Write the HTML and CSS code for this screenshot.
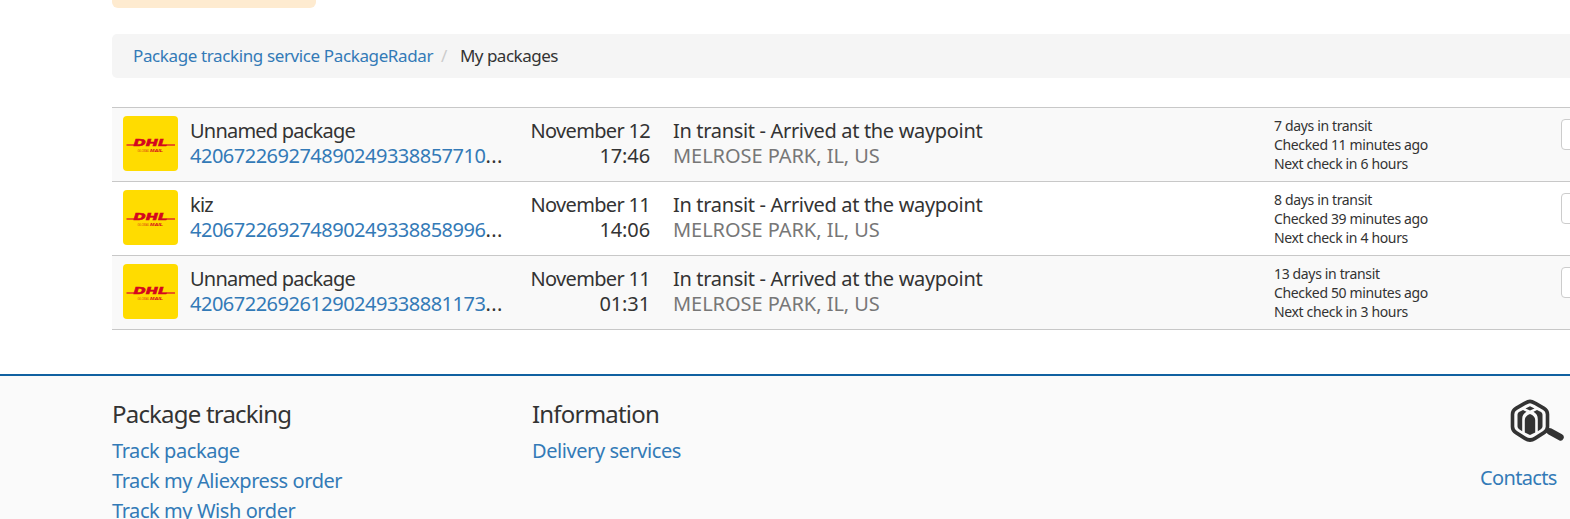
FILE: index.html
```html
<!DOCTYPE html>
<html lang="en">
<head>
  <meta charset="UTF-8">
  <meta name="viewport" content="width=device-width, initial-scale=1.0">
  <title>My packages</title>
  <link rel="stylesheet" href="styles.css">
</head>
<body>
  <svg width="0" height="0" class="sprite" aria-hidden="true">
    <symbol id="dhl" viewBox="0 0 55 55">
      <rect width="55" height="55" rx="4" fill="#ffdc00"/>
      <path d="M3.500 28h9l-.8 2H3.500zM43.500 28H52v2h-9.300z" fill="#ea5b1c"/>
      <text x="10.500" y="29.900" textLength="34" lengthAdjust="spacingAndGlyphs" class="dhl-name">DHL</text>
      <text x="14.500" y="36.200" textLength="12" lengthAdjust="spacingAndGlyphs" class="dhl-sub">GLOBAL</text>
      <text x="27" y="36.200" textLength="13" lengthAdjust="spacingAndGlyphs" class="dhl-sub dhl-mail">MAIL</text>
    </symbol>
  </svg>

  <div class="page">
    <div class="container">
      <div class="notice"></div>

      <ol class="breadcrumb">
        <li><a href="#">Package tracking service PackageRadar</a></li>
        <li class="active">My packages</li>
      </ol>

      <div class="packages">
        <div class="package">
          <svg class="logo"><use href="#dhl"/></svg>
          <div class="name">
            <div class="title">Unnamed package</div>
            <div class="number"><a href="#">420672269274890249338857710</a>...</div>
          </div>
          <div class="date">November 12 <div class="time">17:46</div></div>
          <div class="status">
            <div class="event">In transit - Arrived at the waypoint</div>
            <div class="place">MELROSE PARK, IL, US</div>
          </div>
          <div class="info">7 days in transit<br>Checked 11 minutes ago<br>Next check in 6 hours</div>
          <button class="btn"></button>
        </div>
        <div class="package">
          <svg class="logo"><use href="#dhl"/></svg>
          <div class="name">
            <div class="title">kiz</div>
            <div class="number"><a href="#">420672269274890249338858996</a>...</div>
          </div>
          <div class="date">November 11 <div class="time">14:06</div></div>
          <div class="status">
            <div class="event">In transit - Arrived at the waypoint</div>
            <div class="place">MELROSE PARK, IL, US</div>
          </div>
          <div class="info">8 days in transit<br>Checked 39 minutes ago<br>Next check in 4 hours</div>
          <button class="btn"></button>
        </div>
        <div class="package">
          <svg class="logo"><use href="#dhl"/></svg>
          <div class="name">
            <div class="title">Unnamed package</div>
            <div class="number"><a href="#">420672269261290249338881173</a>...</div>
          </div>
          <div class="date">November 11 <div class="time">01:31</div></div>
          <div class="status">
            <div class="event">In transit - Arrived at the waypoint</div>
            <div class="place">MELROSE PARK, IL, US</div>
          </div>
          <div class="info">13 days in transit<br>Checked 50 minutes ago<br>Next check in 3 hours</div>
          <button class="btn"></button>
        </div>
      </div>
    </div>

    <footer class="footer">
      <div class="footer-col">
        <h4>Package tracking</h4>
        <a href="#">Track package</a>
        <a href="#">Track my Aliexpress order</a>
        <a href="#">Track my Wish order</a>
      </div>
      <div class="footer-col">
        <h4>Information</h4>
        <a href="#">Delivery services</a>
      </div>
      <div class="footer-contacts">
        <svg class="radar" viewBox="0 0 54 41" preserveAspectRatio="none" fill="none">
          <path d="M40 31l10.500 5.500" stroke="#333" stroke-width="6.500" stroke-linecap="round"/>
          <path d="M35 29l5 2.500" stroke="#333" stroke-width="4"/>
          <path d="M20 2.200c2 0 3.300.8 5 1.800l9 5c2.400 1.400 3.500 3 3.500 5.500v12c0 2.500-1.100 4.100-3.500 5.500l-9 5.500c-3.600 2.300-6.400 2.300-10 0l-9-5.500c-2.400-1.400-3.500-3-3.500-5.500v-12C2.500 12 3.600 10.400 6 9l9-5c1.700-1 3-1.800 5-1.800z" fill="#fafafa" stroke="#333" stroke-width="3.600"/>
          <path d="M15.500 9l4.500-2 4.500 2-4.500 2z" fill="#333"/>
          <path d="M7.500 15c0-1.500 1-2.500 2.500-3.200l3-1.300 3.500 1.700c-3 1.800-4.300 3.600-4.300 7v11.500l-3-1.900c-1.200-.8-1.700-1.600-1.700-3z" fill="#333"/>
          <path d="M32.500 15c0-1.500-1-2.500-2.500-3.200l-3-1.300-3.500 1.700c3 1.800 4.300 3.600 4.300 7v11.500l3-1.900c1.200-.8 1.700-1.600 1.700-3z" fill="#333"/>
          <path d="M14.800 20c0-2.500 2-4.500 5.200-5.700 3.200 1.200 5.200 3.200 5.200 5.700v12l-5.200 2.400-5.200-2.400z" fill="#333"/>
        </svg>
        <a href="#">Contacts</a>
      </div>
    </footer>
  </div>
</body>
</html>
```
FILE: styles.css
```css
* {
  box-sizing: border-box;
}

html, body {
  margin: 0;
  height: 100%;
  overflow: hidden;
}

body {
  background: #fff;
  color: #333;
  font-family: Tahoma, "Noto Sans", sans-serif;
  font-size: 20px;
  line-height: 25px;
  letter-spacing: -0.5px;
}

a {
  color: #337ab7;
  text-decoration: none;
}

.sprite {
  display: block;
}

.page {
  width: 1794px;
}

.container {
  padding: 0 112px;
  height: 374px;
}

.notice {
  width: 204px;
  height: 8px;
  background: #feebd0;
  border-radius: 0 0 6px 6px;
}

.breadcrumb {
  display: flex;
  align-items: center;
  list-style: none;
  height: 44px;
  margin: 26px 0 29px;
  padding: 0 21px 2px;
  background: #f5f5f5;
  border-radius: 5px;
  font-size: 17px;
  letter-spacing: -0.38px;
  white-space: nowrap;
}

.breadcrumb .active {
  letter-spacing: -0.5px;
}

.breadcrumb .active::before {
  content: "/";
  color: #ccc;
  padding: 0 13px 0 8px;
}

.packages {
  border-bottom: 1px solid #c8c8c8;
}

.package {
  display: grid;
  grid-template-columns: 67px 330px 130px 601px 310px 60px;
  height: 74px;
  padding: 8px 11px 0;
  border-top: 1px solid #c8c8c8;
  white-space: nowrap;
}

.package:nth-child(odd) {
  background: #f9f9f9;
}

.logo {
  width: 55px;
  height: 55px;
}

.dhl-name {
  font: italic bold 9px "DejaVu Sans", sans-serif;
  letter-spacing: 0;
  fill: #d4051f;
  stroke: #d4051f;
  stroke-width: 0.5px;
}

.dhl-sub {
  font: italic 3.800px "Liberation Sans", sans-serif;
  letter-spacing: 0;
  fill: #e04a14;
}

.dhl-mail {
  font-weight: bold;
  fill: #d4051f;
}

.name, .date, .status {
  padding-top: 2px;
}

.title {
  letter-spacing: -0.78px;
}

.number {
  letter-spacing: 0.5px;
}

.number a {
  letter-spacing: -0.5px;
}

.date {
  text-align: right;
  letter-spacing: -0.68px;
}

.time {
  letter-spacing: -0.1px;
}

.status {
  padding-left: 23px;
}

.event {
  letter-spacing: -0.33px;
}

.place {
  color: #777;
  letter-spacing: -0.05px;
}

.info {
  padding-left: 23px;
  font-size: 14px;
  line-height: 19px;
  letter-spacing: -0.35px;
}

.btn {
  width: 60px;
  height: 31px;
  margin-top: 3px;
  background: #fff;
  border: 1px solid #ccc;
  border-radius: 4px;
}

.footer {
  display: grid;
  grid-template-columns: 420px 948px 1fr;
  height: 170px;
  padding: 22px 112px 0;
  background: #fafafa;
  border-top: 2px solid #1061a1;
}

.footer-col {
  display: flex;
  flex-direction: column;
  line-height: 30px;
  letter-spacing: -0.43px;
}

.footer h4 {
  margin: 0 0 7px;
  font-size: 24px;
  font-weight: normal;
  line-height: 31px;
  letter-spacing: -0.8px;
}

.footer-contacts {
  display: flex;
  flex-direction: column;
  align-items: flex-start;
  letter-spacing: -0.65px;
}

.radar {
  width: 54px;
  height: 43px;
  margin: 1px 0 23px 30px;
}
```
